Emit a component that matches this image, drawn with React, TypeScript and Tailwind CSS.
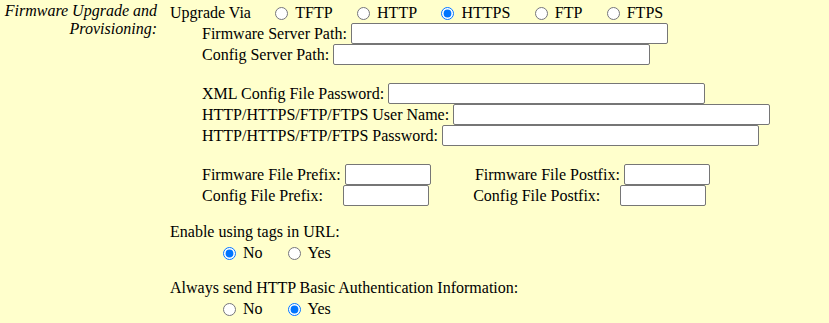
import React from "react";

function Radio({
  name,
  label,
  checked,
  className,
}: {
  name: string;
  label: string;
  checked?: boolean;
  className: string;
}) {
  return (
    <span className={"flex items-center " + className}>
      <input
        type="radio"
        name={name}
        defaultChecked={checked}
        className="m-0 w-[13px] h-[13px] shrink-0"
      />
      <span className="ml-[7px] whitespace-nowrap">{label}</span>
    </span>
  );
}

function BigInput() {
  return (
    <input
      type="text"
      className="ml-1 w-[317px] h-[21px] bg-white border border-[#767676] rounded-[2px] shrink-0"
    />
  );
}

function SmallInput({ className }: { className: string }) {
  return (
    <input
      type="text"
      className={
        "w-[86px] h-[21px] bg-white border border-[#767676] rounded-[2px] shrink-0 " +
        className
      }
    />
  );
}

export default function App() {
  return (
    <div className="w-[829px] h-[323px] overflow-hidden bg-[#ffffcc] font-['Liberation_Serif','Times_New_Roman',serif] text-[16px] leading-[18px] text-black flex">
      <div className="w-[157px] shrink-0 text-right italic pt-[2px] whitespace-nowrap">
        Firmware Upgrade and
        <br />
        Provisioning:
      </div>
      <div className="ml-[13px] flex flex-col">
        <div className="flex items-center h-[20px] mt-[3px] whitespace-nowrap">
          <span>Upgrade Via</span>
          <Radio name="via" label="TFTP" className="ml-[24.4px]" />
          <Radio name="via" label="HTTP" className="ml-[24.4px]" />
          <Radio name="via" label="HTTPS" checked className="ml-[24.4px]" />
          <Radio name="via" label="FTP" className="ml-[24.4px]" />
          <Radio name="via" label="FTPS" className="ml-[24.4px]" />
        </div>
        <div className="ml-[32px] flex flex-col whitespace-nowrap">
          <div className="flex items-center h-[21px]">
            <span>Firmware Server Path:</span>
            <BigInput />
          </div>
          <div className="flex items-center h-[21px]">
            <span>Config Server Path:</span>
            <BigInput />
          </div>
          <div className="h-[18px]" />
          <div className="flex items-center h-[21px]">
            <span>XML Config File Password:</span>
            <BigInput />
          </div>
          <div className="flex items-center h-[21px]">
            <span>HTTP/HTTPS/FTP/FTPS User Name:</span>
            <BigInput />
          </div>
          <div className="flex items-center h-[21px]">
            <span>HTTP/HTTPS/FTP/FTPS Password:</span>
            <BigInput />
          </div>
          <div className="h-[18px]" />
          <div className="flex items-center h-[21px]">
            <span>Firmware File Prefix:</span>
            <SmallInput className="ml-1" />
            <span className="ml-[44.3px]">Firmware File Postfix:</span>
            <SmallInput className="ml-1" />
          </div>
          <div className="flex items-center h-[21px]">
            <span>Config File Prefix:</span>
            <SmallInput className="ml-[20px]" />
            <span className="ml-[44.3px]">Config File Postfix:</span>
            <SmallInput className="ml-[20px]" />
          </div>
        </div>
        <div className="mt-[17px] h-[18px] whitespace-nowrap">Enable using tags in URL:</div>
        <div className="flex items-center h-[20px] mt-[2px]">
          <Radio name="tags" label="No" checked className="ml-[53px]" />
          <Radio name="tags" label="Yes" className="ml-[25px]" />
        </div>
        <div className="mt-[16px] h-[18px] whitespace-nowrap">
          Always send HTTP Basic Authentication Information:
        </div>
        <div className="flex items-center h-[20px] mt-[2px]">
          <Radio name="auth" label="No" className="ml-[53px]" />
          <Radio name="auth" label="Yes" checked className="ml-[25px]" />
        </div>
      </div>
    </div>
  );
}
